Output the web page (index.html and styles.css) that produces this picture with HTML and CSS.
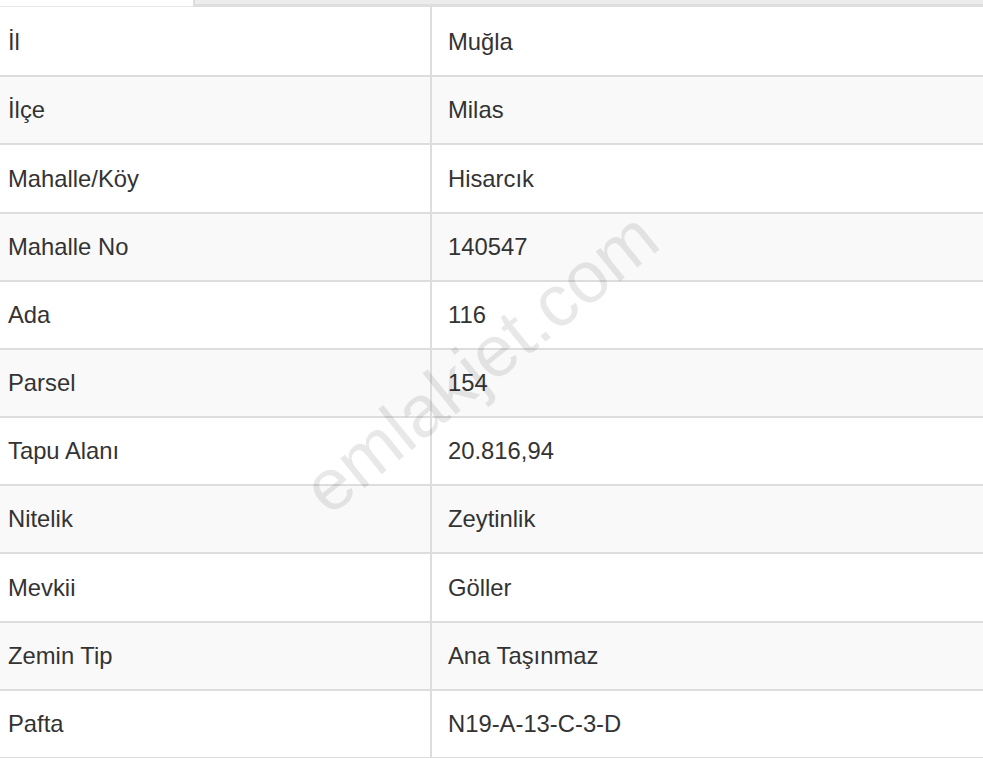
FILE: index.html
```html
<!DOCTYPE html>
<html lang="tr">
<head>
<meta charset="utf-8">
<link rel="stylesheet" href="styles.css">
</head>
<body>
<div class="page">
  <div class="tabs">
    <div class="tab"></div>
    <div class="tab-rest"></div>
  </div>
  <table class="info">
    <tbody>
      <tr><td class="k">İl</td><td class="v">Muğla</td></tr>
      <tr><td class="k">İlçe</td><td class="v">Milas</td></tr>
      <tr><td class="k">Mahalle/Köy</td><td class="v">Hisarcık</td></tr>
      <tr><td class="k">Mahalle No</td><td class="v">140547</td></tr>
      <tr><td class="k">Ada</td><td class="v">116</td></tr>
      <tr><td class="k">Parsel</td><td class="v">154</td></tr>
      <tr><td class="k">Tapu Alanı</td><td class="v">20.816,94</td></tr>
      <tr><td class="k">Nitelik</td><td class="v">Zeytinlik</td></tr>
      <tr><td class="k">Mevkii</td><td class="v">Göller</td></tr>
      <tr><td class="k">Zemin Tip</td><td class="v">Ana Taşınmaz</td></tr>
      <tr><td class="k">Pafta</td><td class="v">N19-A-13-C-3-D</td></tr>
    </tbody>
  </table>
  <div class="watermark">emlakjet.com</div>
</div>
</body>
</html>
```

FILE: styles.css
```css
html, body {
  margin: 0;
  padding: 0;
  background: #fff;
}
.page {
  position: relative;
  width: 983px;
  height: 758px;
  overflow: hidden;
  font-family: "Liberation Sans", Arial, sans-serif;
  color: #333;
}
.tabs {
  display: flex;
  height: 7px;
}
.tab {
  width: 195px;
  background: #fff;
  border-right: 2px solid #ddd;
  border-bottom: 1px solid #e6e6e6;
  box-sizing: border-box;
}
.tab-rest {
  flex: 1;
  background: #ececec;
  border-bottom: 3px solid #dedede;
}
.info {
  width: 983px;
  border-collapse: collapse;
  table-layout: fixed;
}
.info tr {
  height: 68.18px;
  border-top: 2px solid #ddd;
}
.info tr:first-child {
  border-top-color: #fff;
}
.info tr:last-child {
  border-bottom: 2px solid #ddd;
}
.info tr:nth-child(even) {
  background: #f9f9f9;
}
.info td {
  padding: 0;
  font-size: 23.8px;
  line-height: 1;
  vertical-align: middle;
}
.info .k {
  width: 431px;
  padding-left: 8px;
  box-sizing: border-box;
}
.info .v {
  border-left: 2px solid #ddd;
  padding-left: 16px;
}
.watermark {
  position: absolute;
  left: 480px;
  top: 362px;
  transform: translate(-50%, -50%) rotate(-39deg);
  font-size: 73px;
  color: rgba(0, 0, 0, 0.09);
  white-space: nowrap;
  pointer-events: none;
}
```
